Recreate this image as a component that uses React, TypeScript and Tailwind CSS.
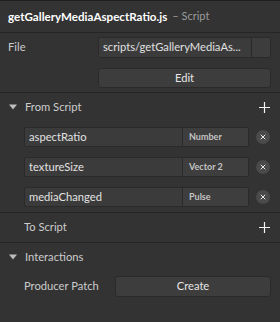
import { X } from 'lucide-react';

const font = { fontFamily: 'Lato, "Noto Sans", sans-serif' };

interface Param {
  name: string;
  type: string;
}

const params: Param[] = [
  { name: 'aspectRatio', type: 'Number' },
  { name: 'textureSize', type: 'Vector 2' },
  { name: 'mediaChanged', type: 'Pulse' },
];

const Caret = () => (
  <svg width="8" height="6" viewBox="0 0 8 6" className="mr-[8px] ml-[9px]">
    <path d="M0 0.5 L8 0.5 L4 5.5 Z" fill="#bdbdbd" />
  </svg>
);

const Plus = () => (
  <svg width="11" height="11" viewBox="0 0 11 11">
    <path d="M5.5 0 V11 M0 5.5 H11" stroke="#f2f2f2" strokeWidth="1.2" />
  </svg>
);

const Divider = () => <div className="h-px bg-[#262626]" />;

export default function App() {
  return (
    <div
      className="w-[280px] h-[322px] bg-[#333333] border-t border-[#1f1f1f] text-[11.2px] text-[#cccccc] overflow-hidden"
      style={font}
    >
      {/* Header */}
      <div className="h-[31px] px-[8px] flex items-center">
        <span className="font-bold text-[11.6px] text-white">getGalleryMediaAspectRatio.js</span>
        <span className="ml-[5px] text-[11px] text-[#9a9a9a]">– Script</span>
      </div>
      <Divider />

      {/* File */}
      <div className="pt-[4px] pb-[4px]">
        <div className="flex items-center h-[21px]">
          <div className="w-[98px] pl-[8px]">File</div>
          <div className="flex h-[21px] w-[173px] rounded-[2px] border border-[#2a2a2a] bg-[#3b3b3b] overflow-hidden">
            <div className="flex-1 px-[4px] flex items-center text-[#e0e0e0] whitespace-nowrap">
              scripts/getGalleryMediaAs...
            </div>
            <div className="w-[19px] border-l border-[#2a2a2a] bg-[#3d3d3d]" />
          </div>
        </div>
        <div className="flex mt-[10px]">
          <div className="w-[98px]" />
          <button className="w-[173px] h-[20px] rounded-[3px] border border-[#2a2a2a] bg-[#3d3d3d] text-[#e6e6e6] text-[11.2px] flex items-center justify-center">
            Edit
          </button>
        </div>
      </div>
      <Divider />

      {/* From Script */}
      <div className="pb-[5px]">
        <div className="h-[28px] flex items-center pr-[10px]">
          <Caret />
          <span className="flex-1">From Script</span>
          <Plus />
        </div>
        <div className="flex flex-col gap-[10px] mt-[6px]">
          {params.map((p) => (
            <div key={p.name} className="flex items-center">
              <div className="ml-[24px] w-[225px] h-[20px] flex rounded-[2px] border border-[#2a2a2a] bg-[#3b3b3b] overflow-hidden">
                <div className="flex-1 flex items-center px-[4px] text-[#e2e2e2]">{p.name}</div>
                <div className="w-[66px] flex items-center px-[6px] border-l border-[#2a2a2a] bg-[#3e3e3e] text-[9px] font-bold text-[#c4c4c4]">
                  {p.type}
                </div>
              </div>
              <div className="ml-[7px] w-[14px] h-[14px] rounded-full bg-[#4a4a4a] flex items-center justify-center">
                <X size={8} strokeWidth={3} color="#e8e8e8" />
              </div>
            </div>
          ))}
        </div>
      </div>
      <Divider />

      {/* To Script */}
      <div className="h-[29px] flex items-center pl-[24px] pr-[10px]">
        <span className="flex-1">To Script</span>
        <Plus />
      </div>
      <Divider />

      {/* Interactions */}
      <div className="h-[28px] flex items-center">
        <Caret />
        <span>Interactions</span>
      </div>
      <div className="flex items-center mt-[5px]">
        <div className="w-[115px] pl-[24px] whitespace-nowrap">Producer Patch</div>
        <button className="w-[156px] h-[21px] rounded-[3px] border border-[#2a2a2a] bg-[#3d3d3d] text-[#e6e6e6] text-[11.2px] flex items-center justify-center">
          Create
        </button>
      </div>
    </div>
  );
}
